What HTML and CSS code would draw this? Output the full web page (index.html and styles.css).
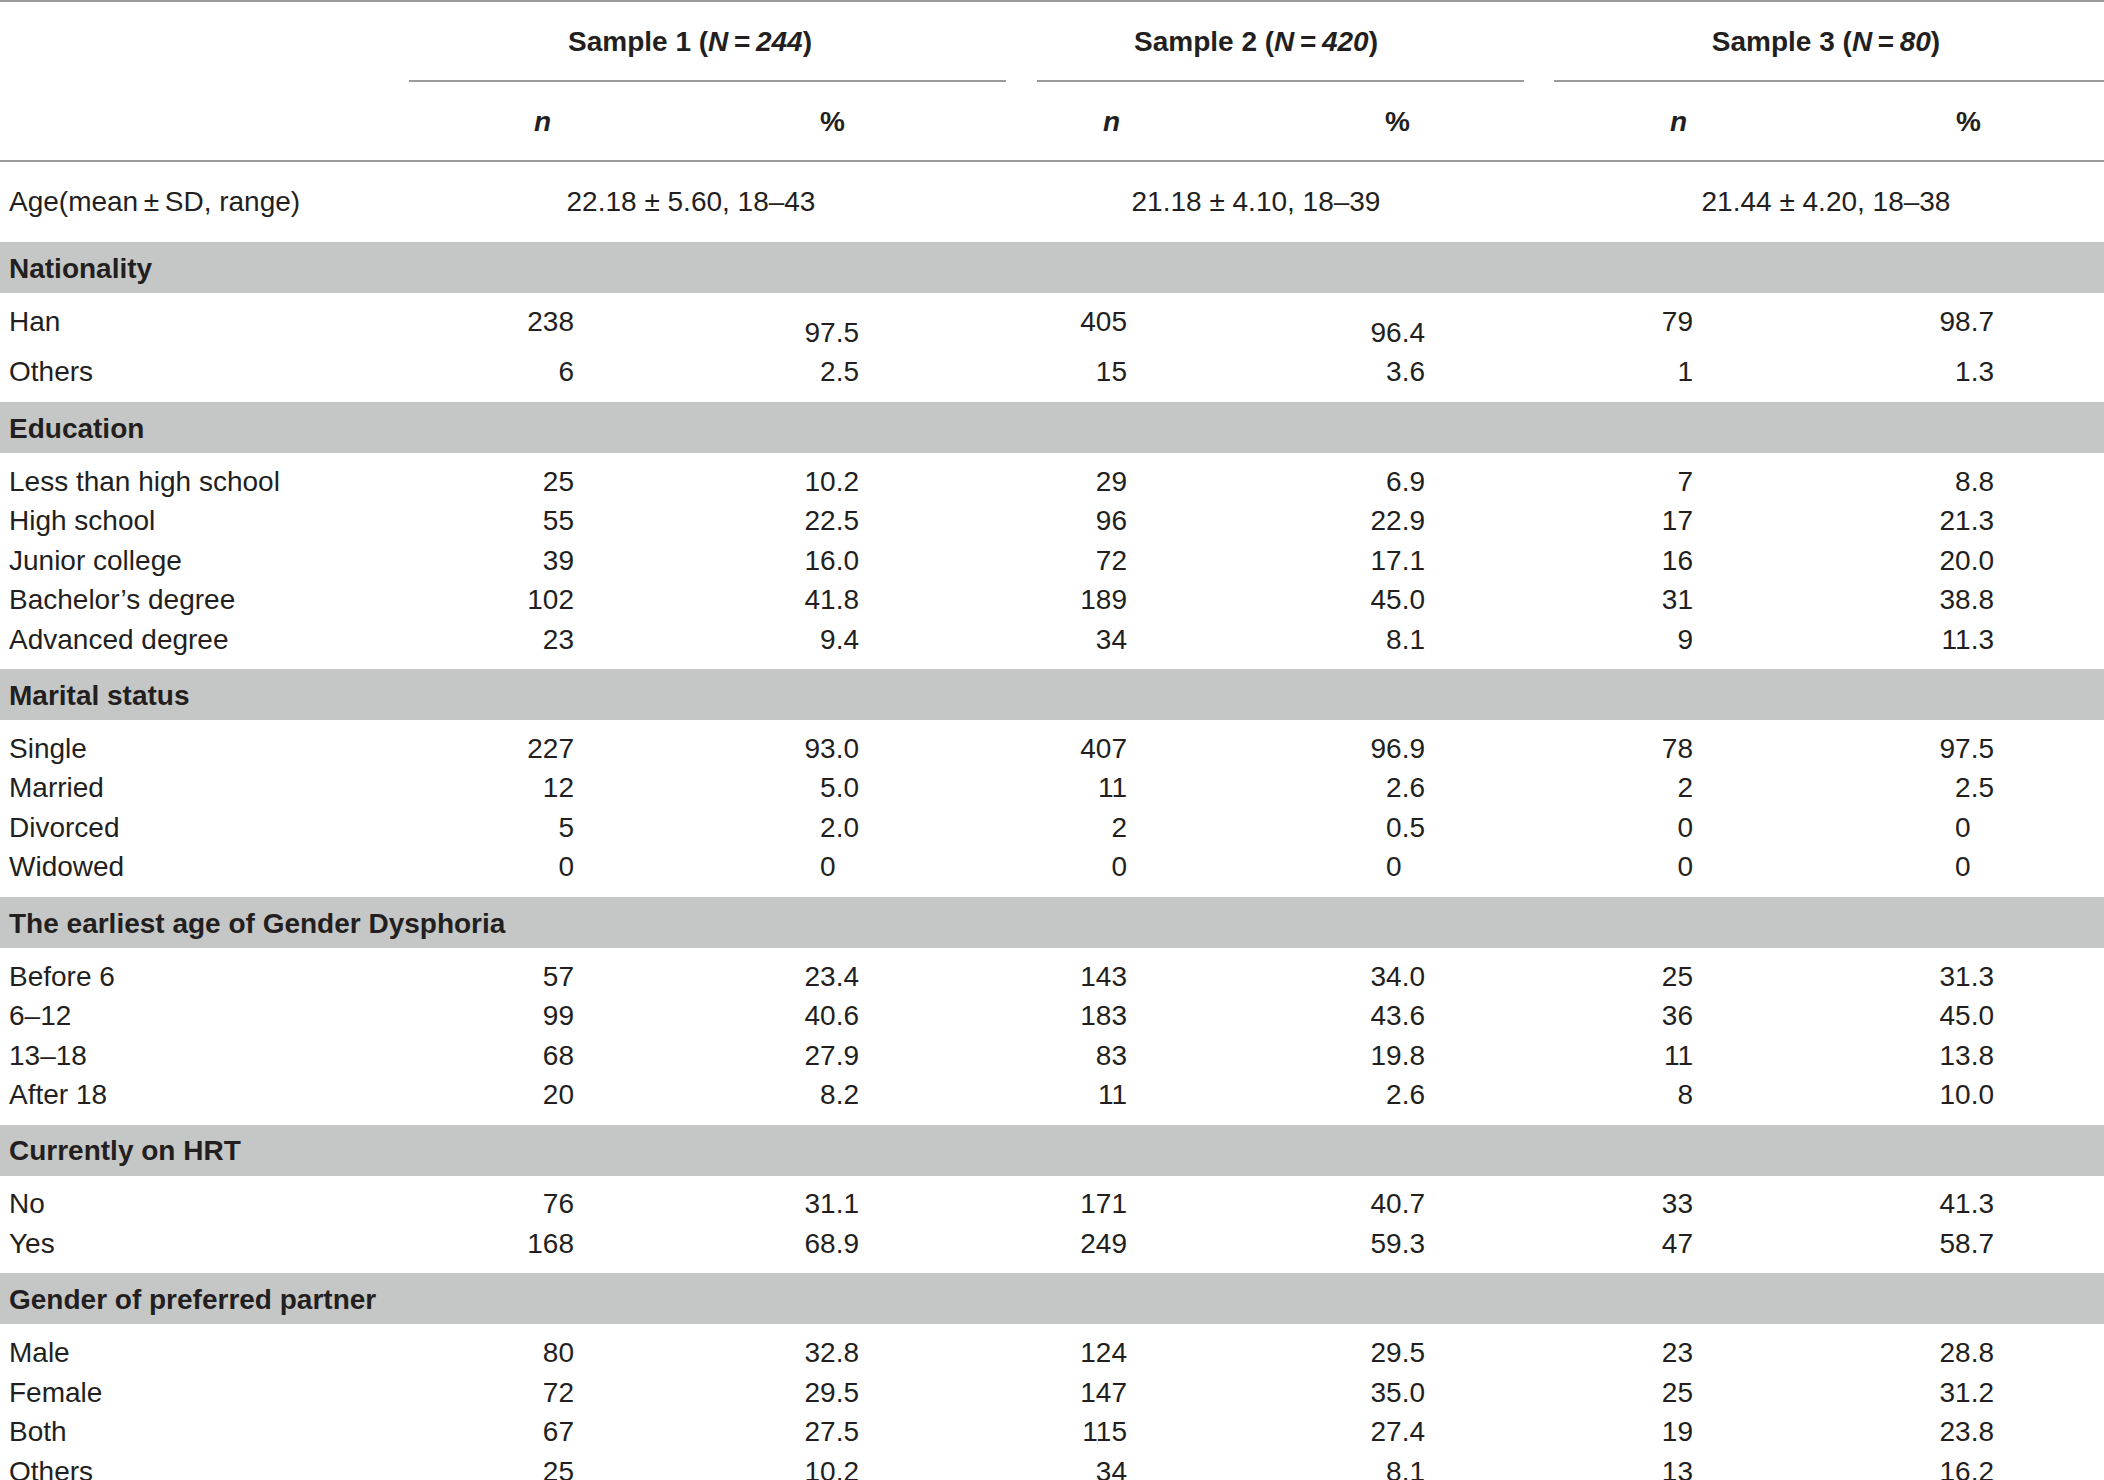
FILE: index.html
```html
<!DOCTYPE html>
<html lang="en">
<head>
<meta charset="utf-8">
<title>Sample characteristics</title>
<link rel="stylesheet" href="styles.css">
</head>
<body>
<table class="tbl">
  <colgroup>
    <col class="w0"><col class="w1"><col class="w2"><col class="w3"><col class="w4"><col class="w5"><col class="w6">
  </colgroup>
  <thead>
    <tr class="hr1">
      <th class="blank"></th>
      <th colspan="2" class="grp-cell"><div class="grp g1">Sample 1 (<i>N</i>&#8201;=&#8201;<i>244</i>)</div></th>
      <th colspan="2" class="grp-cell"><div class="grp g2">Sample 2 (<i>N</i>&#8201;=&#8201;<i>420</i>)</div></th>
      <th colspan="2" class="grp-cell"><div class="grp g3">Sample 3 (<i>N</i>&#8201;=&#8201;<i>80</i>)</div></th>
    </tr>
    <tr class="hr2">
      <th class="blank"></th>
      <th class="sub c1"><i>n</i></th><th class="sub c2">%</th>
      <th class="sub c3"><i>n</i></th><th class="sub c4">%</th>
      <th class="sub c5"><i>n</i></th><th class="sub c6">%</th>
    </tr>
  </thead>
  <tbody>
    <tr class="age">
      <td class="lbl">Age(mean&#8201;±&#8201;SD, range)</td>
      <td colspan="2" class="agev a1">22.18 ± 5.60, 18–43</td>
      <td colspan="2" class="agev a2">21.18 ± 4.10, 18–39</td>
      <td colspan="2" class="agev a3">21.44 ± 4.20, 18–38</td>
    </tr>
  </tbody>
  <tbody class="grp-body">
    <tr class="band"><td colspan="7">Nationality</td></tr>
    <tr class="han"><td class="lbl">Han</td><td class="num c1">238</td><td class="num c2 low">97.5</td><td class="num c3">405</td><td class="num c4 low">96.4</td><td class="num c5">79</td><td class="num c6">98.7</td></tr>
    <tr><td class="lbl">Others</td><td class="num c1">6</td><td class="num c2">2.5</td><td class="num c3">15</td><td class="num c4">3.6</td><td class="num c5">1</td><td class="num c6">1.3</td></tr>
  </tbody>
  <tbody class="grp-body">
    <tr class="band"><td colspan="7">Education</td></tr>
    <tr><td class="lbl">Less than high school</td><td class="num c1">25</td><td class="num c2">10.2</td><td class="num c3">29</td><td class="num c4">6.9</td><td class="num c5">7</td><td class="num c6">8.8</td></tr>
    <tr><td class="lbl">High school</td><td class="num c1">55</td><td class="num c2">22.5</td><td class="num c3">96</td><td class="num c4">22.9</td><td class="num c5">17</td><td class="num c6">21.3</td></tr>
    <tr><td class="lbl">Junior college</td><td class="num c1">39</td><td class="num c2">16.0</td><td class="num c3">72</td><td class="num c4">17.1</td><td class="num c5">16</td><td class="num c6">20.0</td></tr>
    <tr><td class="lbl">Bachelor’s degree</td><td class="num c1">102</td><td class="num c2">41.8</td><td class="num c3">189</td><td class="num c4">45.0</td><td class="num c5">31</td><td class="num c6">38.8</td></tr>
    <tr><td class="lbl">Advanced degree</td><td class="num c1">23</td><td class="num c2">9.4</td><td class="num c3">34</td><td class="num c4">8.1</td><td class="num c5">9</td><td class="num c6">11.3</td></tr>
  </tbody>
  <tbody class="grp-body">
    <tr class="band"><td colspan="7">Marital status</td></tr>
    <tr><td class="lbl">Single</td><td class="num c1">227</td><td class="num c2">93.0</td><td class="num c3">407</td><td class="num c4">96.9</td><td class="num c5">78</td><td class="num c6">97.5</td></tr>
    <tr><td class="lbl">Married</td><td class="num c1">12</td><td class="num c2">5.0</td><td class="num c3">11</td><td class="num c4">2.6</td><td class="num c5">2</td><td class="num c6">2.5</td></tr>
    <tr><td class="lbl">Divorced</td><td class="num c1">5</td><td class="num c2">2.0</td><td class="num c3">2</td><td class="num c4">0.5</td><td class="num c5">0</td><td class="num c6 int">0</td></tr>
    <tr><td class="lbl">Widowed</td><td class="num c1">0</td><td class="num c2 int">0</td><td class="num c3">0</td><td class="num c4 int">0</td><td class="num c5">0</td><td class="num c6 int">0</td></tr>
  </tbody>
  <tbody class="grp-body">
    <tr class="band"><td colspan="7">The earliest age of Gender Dysphoria</td></tr>
    <tr><td class="lbl">Before 6</td><td class="num c1">57</td><td class="num c2">23.4</td><td class="num c3">143</td><td class="num c4">34.0</td><td class="num c5">25</td><td class="num c6">31.3</td></tr>
    <tr><td class="lbl">6–12</td><td class="num c1">99</td><td class="num c2">40.6</td><td class="num c3">183</td><td class="num c4">43.6</td><td class="num c5">36</td><td class="num c6">45.0</td></tr>
    <tr><td class="lbl">13–18</td><td class="num c1">68</td><td class="num c2">27.9</td><td class="num c3">83</td><td class="num c4">19.8</td><td class="num c5">11</td><td class="num c6">13.8</td></tr>
    <tr><td class="lbl">After 18</td><td class="num c1">20</td><td class="num c2">8.2</td><td class="num c3">11</td><td class="num c4">2.6</td><td class="num c5">8</td><td class="num c6">10.0</td></tr>
  </tbody>
  <tbody class="grp-body">
    <tr class="band"><td colspan="7">Currently on HRT</td></tr>
    <tr><td class="lbl">No</td><td class="num c1">76</td><td class="num c2">31.1</td><td class="num c3">171</td><td class="num c4">40.7</td><td class="num c5">33</td><td class="num c6">41.3</td></tr>
    <tr><td class="lbl">Yes</td><td class="num c1">168</td><td class="num c2">68.9</td><td class="num c3">249</td><td class="num c4">59.3</td><td class="num c5">47</td><td class="num c6">58.7</td></tr>
  </tbody>
  <tbody class="grp-body">
    <tr class="band"><td colspan="7">Gender of preferred partner</td></tr>
    <tr><td class="lbl">Male</td><td class="num c1">80</td><td class="num c2">32.8</td><td class="num c3">124</td><td class="num c4">29.5</td><td class="num c5">23</td><td class="num c6">28.8</td></tr>
    <tr><td class="lbl">Female</td><td class="num c1">72</td><td class="num c2">29.5</td><td class="num c3">147</td><td class="num c4">35.0</td><td class="num c5">25</td><td class="num c6">31.2</td></tr>
    <tr><td class="lbl">Both</td><td class="num c1">67</td><td class="num c2">27.5</td><td class="num c3">115</td><td class="num c4">27.4</td><td class="num c5">19</td><td class="num c6">23.8</td></tr>
    <tr><td class="lbl">Others</td><td class="num c1">25</td><td class="num c2">10.2</td><td class="num c3">34</td><td class="num c4">8.1</td><td class="num c5">13</td><td class="num c6">16.2</td></tr>
  </tbody>
</table>
</body>
</html>
```

FILE: styles.css
```css
html, body {
  margin: 0;
  padding: 0;
  background: #ffffff;
  overflow: hidden;
}

body {
  width: 2104px;
  height: 1480px;
  font-family: "Liberation Sans", Arial, sans-serif;
  font-size: 28px;
  color: #231f20;
}

.tbl {
  width: 2104px;
  table-layout: fixed;
  border-collapse: separate;
  border-spacing: 0;
}

.w0 { width: 409px; }
.w1 { width: 291px; }
.w2 { width: 322px; }
.w3 { width: 238px; }
.w4 { width: 279px; }
.w5 { width: 281px; }
.w6 { width: 284px; }

th, td {
  padding: 0;
  white-space: nowrap;
}

th {
  font-weight: 700;
}

/* header row 1 */
.hr1 th {
  border-top: 2px solid #9a9a9a;
  vertical-align: top;
}
.hr1 .blank {
  height: 80px;
}
.grp {
  height: 78px;
  line-height: 80px;
  text-align: center;
  border-bottom: 2px solid #9a9a9a;
}
.g1 { margin-right: 16px; padding-right: 35px; }
.g2 { margin: 0 15px; padding-right: 49px; }
.g3 { margin-left: 15px; padding-right: 6px; }

/* header row 2 */
.hr2 th {
  height: 76px;
  line-height: 76px;
  padding-top: 2px;
  border-bottom: 2px solid #9a9a9a;
  text-align: right;
  padding-right: var(--hp);
}

.c1 { --pr: 126px; --hp: 149px; }
.c2 { --pr: 163px; --hp: 177px; }
.c3 { --pr: 133px; --hp: 140px; }
.c4 { --pr: 114px; --hp: 129px; }
.c5 { --pr: 127px; --hp: 133px; }
.c6 { --pr: 110px; --hp: 123px; }

/* age row */
.age td {
  line-height: 80px;
}
.agev { text-align: center; }
.a1 { padding-right: 49px; }
.a2 { padding-right: 49px; }
.a3 { padding-left: 9px; }

.lbl {
  padding-left: 9px;
  text-align: left;
}

/* section band */
.band td {
  background: #c5c7c6;
  font-weight: 700;
  line-height: 49px;
  padding: 2px 0 0 9px;
  height: 49px;
}

/* data rows */
.grp-body td {
  line-height: 39.5px;
}
.grp-body tr:nth-child(2) td {
  padding-top: 8.75px;
}
.grp-body tr:last-child td {
  padding-bottom: 10px;
}

.num {
  text-align: right;
  padding-right: var(--pr);
}
.num.int {
  padding-right: calc(var(--pr) + 0.834em);
}

.han td {
  vertical-align: top;
}
.grp-body tr.han td.low {
  padding-top: 19.75px;
}
```
